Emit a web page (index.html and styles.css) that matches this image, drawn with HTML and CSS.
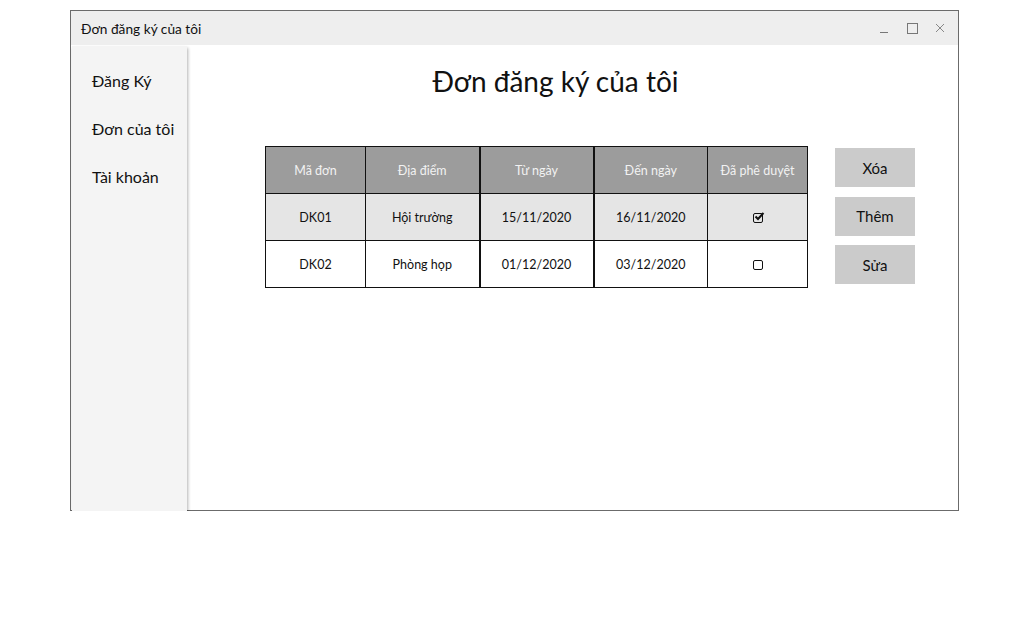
FILE: index.html
```html
<!DOCTYPE html>
<html lang="vi">
<head>
<meta charset="utf-8">
<title>Đơn đăng ký của tôi</title>
<link rel="stylesheet" href="styles.css">
</head>
<body>
<div class="window">
  <div class="titlebar">
    <span class="title">Đơn đăng ký của tôi</span>
    <div class="controls">
      <svg width="12" height="12" viewBox="0 0 12 12"><path d="M2 10.5h8" stroke="#777" stroke-width="1"/></svg>
      <svg width="12" height="12" viewBox="0 0 12 12"><rect x="1.5" y="1.5" width="10" height="10" fill="none" stroke="#777" stroke-width="1"/></svg>
      <svg width="12" height="12" viewBox="0 0 12 12"><path d="M2 2l8 8M10 2l-8 8" stroke="#888" stroke-width="1"/></svg>
    </div>
  </div>
  <div class="body">
    <nav class="sidebar">
      <a class="nav-item">Đăng Ký</a>
      <a class="nav-item">Đơn của tôi</a>
      <a class="nav-item">Tài khoản</a>
    </nav>
    <main class="content">
      <h1 class="heading">Đơn đăng ký của tôi</h1>
      <div class="work">
        <table class="grid">
          <thead>
            <tr><th class="c1">Mã đơn</th><th class="c2">Địa điểm</th><th class="c3">Từ ngày</th><th class="c4">Đến ngày</th><th class="c5">Đã phê duyệt</th></tr>
          </thead>
          <tbody>
            <tr class="alt"><td>DK01</td><td>Hội trường</td><td class="thick">15/11/2020</td><td class="thick">16/11/2020</td><td><span class="box checked"><svg width="11" height="10" viewBox="0 0 11 10"><path d="M1.5 4.5l2.5 2.5 5.5-6" fill="none" stroke="#111" stroke-width="2"/></svg></span></td></tr>
            <tr><td>DK02</td><td>Phòng họp</td><td class="thick">01/12/2020</td><td class="thick">03/12/2020</td><td><span class="box"></span></td></tr>
          </tbody>
        </table>
        <div class="actions">
          <button class="btn">Xóa</button>
          <button class="btn">Thêm</button>
          <button class="btn">Sửa</button>
        </div>
      </div>
    </main>
  </div>
</div>
</body>
</html>
```

FILE: styles.css
```css
* { box-sizing: border-box; }
html, body { margin: 0; padding: 0; background: #fff; }
body {
  font-family: Lato, "Noto Sans", "Liberation Sans", sans-serif;
  color: #111;
  padding: 10px 0 0 70px;
}
.window {
  width: 889px;
  height: 501px;
  border: 1px solid #6b6b6b;
  display: flex;
  flex-direction: column;
}
.titlebar {
  height: 34px;
  background: #eeeeee;
  display: flex;
  align-items: center;
  justify-content: space-between;
  padding: 0 12px 0 10px;
  flex: none;
}
.title { font-size: 13.7px; color: #111; }
.controls { display: flex; gap: 16px; align-items: center; }
.controls svg { display: block; }
.body {
  flex: 1;
  display: flex;
  position: relative;
}
.sidebar {
  width: 115px;
  margin: 1px 0 -2px 1px;
  background: #f4f4f4;
  box-shadow: 1px 2px 3px rgba(0,0,0,0.3);
  display: flex;
  flex-direction: column;
  padding: 24px 0 0 20px;
  gap: 27px;
  flex: none;
  position: relative;
  z-index: 1;
}
.nav-item { font-size: 16px; line-height: 21px; color: #111; }
.content { flex: 1; display: flex; flex-direction: column; }
.heading {
  font-weight: 400;
  font-size: 28px;
  margin: 19px 0 0 0;
  line-height: 34px;
  text-align: center;
  padding-right: 34px;
}
.work {
  display: flex;
  margin: 48px 0 0 78px;
  gap: 27px;
  align-items: flex-start;
}
.grid {
  border-collapse: collapse;
  font-size: 12.5px;
}
.grid th, .grid td {
  border: 1px solid #111;
  height: 47px;
  text-align: center;
  padding: 0;
}
.grid th {
  background: #9c9c9c;
  color: #f2f2f2;
  font-weight: 400;
  height: 47px;
}
.c1 { width: 100px; }
.c2 { width: 114px; }
.c3 { width: 114px; border-left-width: 2px !important; }
.c4 { width: 114px; border-left-width: 2px !important; }
.c5 { width: 100px; }
.grid td.thick { border-left-width: 2px; }
.grid tr.alt td { background: #e5e5e5; height: 47px; }
.box {
  display: inline-block;
  width: 10px;
  height: 10px;
  border: 1px solid #111;
  border-radius: 2px;
  vertical-align: middle;
  position: relative;
}
.box svg { position: absolute; left: 0; top: -2px; }
.actions { display: flex; flex-direction: column; gap: 9.5px; padding-top: 2px; }
.btn {
  width: 80px;
  height: 39px;
  border: none;
  background: #cbcbcb;
  font-family: inherit;
  font-size: 15px;
  color: #111;
  padding: 0;
}
```
